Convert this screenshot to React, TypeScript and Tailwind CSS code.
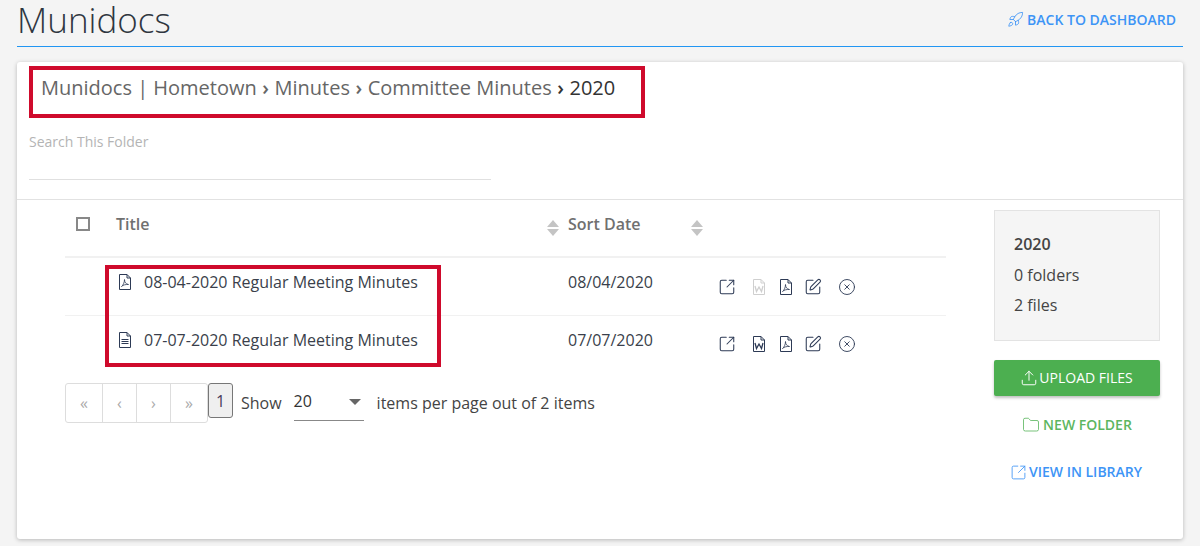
import { CircleX, Folder, Rocket, SquareArrowOutUpRight, SquarePen, Upload } from "lucide-react";

const ICON = "text-[#2d3a55]";

// page outline shared by the file type icons
function DocIcon({ kind, muted }: { kind: "pdf" | "word" | "text"; muted?: boolean }) {
  return (
    <svg
      width="14"
      height="16"
      viewBox="0 0 14 16"
      fill="none"
      stroke="currentColor"
      strokeWidth="1"
      className={muted ? "text-[#cfcfcf]" : ICON}
    >
      <path d="M1.5 .5h7.5l3.5 3.5v11.500h-11z" />
      <path d="M9 .5v3.500h3.500" />
      {kind === "pdf" && <path d="M3.500 12.500c1.500-1 3-4 3-7 0 3 1.500 4.500 4 5-2.500-.3-5.500.5-7 2z" strokeWidth=".8" />}
      {kind === "word" && <path d="M3 7l1.500 5.500 2.500-4.500 2.500 4.500 1.500-5.500" strokeWidth="1.300" />}
      {kind === "text" && <path d="M3.500 7.500h7M3.500 9.500h7M3.500 11.500h7" />}
    </svg>
  );
}

function RowActions({ wordMuted }: { wordMuted?: boolean }) {
  return (
    <div className="flex items-center">
      <SquareArrowOutUpRight size={18} strokeWidth={1.4} className={ICON} />
      <div className="ml-[16px] w-[14px]">
        <DocIcon kind="word" muted={wordMuted} />
      </div>
      <div className="ml-[13px] w-[14px]">
        <DocIcon kind="pdf" />
      </div>
      <SquarePen size={18} strokeWidth={1.4} className={`ml-[11px] ${ICON}`} />
      <CircleX size={18} strokeWidth={1.2} className={`ml-[16px] ${ICON}`} />
    </div>
  );
}

function SortArrows() {
  return (
    <div className="flex flex-col gap-[2px]">
      <div className="h-0 w-0 border-x-[6px] border-b-[7px] border-x-transparent border-b-[#c4c4c4]" />
      <div className="h-0 w-0 border-x-[6px] border-t-[7px] border-x-transparent border-t-[#c4c4c4]" />
    </div>
  );
}

function FileRow({
  icon,
  title,
  date,
  wordMuted,
  actionsClass,
}: {
  icon: "pdf" | "text";
  title: string;
  date: string;
  wordMuted?: boolean;
  actionsClass: string;
}) {
  return (
    <div className="flex h-[57px] items-start">
      <div className="ml-[53px] flex w-[450px] items-center pt-[13px]">
        <DocIcon kind={icon} />
        <span className="ml-[12px] text-[16px] leading-[22px] text-[#3a3f4b]">{title}</span>
      </div>
      <div className="w-[150px] pt-[13px] text-[16px] leading-[22px] text-[#3a3f4b]">{date}</div>
      <div className={actionsClass}>
        <RowActions wordMuted={wordMuted} />
      </div>
    </div>
  );
}

function Crumb({ dark }: { dark?: boolean }) {
  return <span className={dark ? "mx-[5.5px] font-semibold text-[#333]" : "mx-[5.5px] font-semibold text-[#666]"}>›</span>;
}

export default function App() {
  return (
    <div className="h-[546px] overflow-hidden bg-[#f4f4f4] px-[17px] font-['Open_Sans',sans-serif]">
      {/* Header */}
      <header className="flex h-[47px] items-center justify-between border-b border-[#2196f3] pt-[1px] pb-[8px]">
        <h1 className="text-[35px] leading-[34px] font-light text-[#2f3640]">Munidocs</h1>
        <a className="mr-[7px] flex items-center gap-[3px] text-[14px] font-semibold text-[#3d94f6]">
          <Rocket size={17} strokeWidth={1.2} />
          BACK TO DASHBOARD
        </a>
      </header>

      {/* Main card */}
      <main className="mt-[15px] h-[477px] rounded-[3px] bg-white shadow-[0_1px_4px_rgba(0,0,0,0.25)]">
        <div className="h-[138px] border-b border-[#e2e2e2] px-[12px] pt-[4px]">
          <div className="flex h-[52px] w-[616px] items-start border-[4px] border-[#cf0a2c] pt-[4px] pl-[8px] text-[20px] leading-[27px] text-[#666]">
            Munidocs | Hometown
            <Crumb />
            Minutes
            <Crumb />
            Committee Minutes
            <Crumb dark />
            <span className="text-[#333]">2020</span>
          </div>
          <div className="mt-[14px] text-[14px] leading-[20px] text-[#b4b4b4]">Search This Folder</div>
          <div className="mt-[27px] w-[462px] border-b border-[#e0e0e0]" />
        </div>

        <div className="flex">
          {/* File table */}
          <div className="ml-[48px] w-[881px]">
            <div className="flex h-[58px] items-start border-b-2 border-[#f1f1f1]">
              <div className="mt-[17px] ml-[11px] h-[14px] w-[14px] border-2 border-[#888]" />
              <div className="ml-[26px] w-[431px] pt-[13px] text-[16px] leading-[22px] font-semibold text-[#707070]">Title</div>
              <div className="pt-[20px]">
                <SortArrows />
              </div>
              <div className="ml-[9px] w-[123px] pt-[13px] text-[16px] leading-[22px] font-semibold text-[#707070]">Sort Date</div>
              <div className="pt-[20px]">
                <SortArrows />
              </div>
            </div>

            <div className="relative">
              <div className="border-b border-[#f1f1f1]">
                <FileRow icon="pdf" title="08-04-2020 Regular Meeting Minutes" date="08/04/2020" wordMuted actionsClass="pt-[20px]" />
              </div>
              <FileRow icon="text" title="07-07-2020 Regular Meeting Minutes" date="07/07/2020" actionsClass="pt-[19px]" />
              {/* Red highlight drawn over the rows */}
              <div className="absolute top-[7px] left-[40px] h-[102px] w-[336px] border-[4px] border-[#cf0a2c]" />
            </div>

            <div className="mt-[10px] flex items-start">
              <div className="flex h-[40px] rounded-[3px] border border-[#ddd] text-[16px] text-[#aaa]">
                <span className="flex w-[37px] items-center justify-center border-r border-[#ddd]">«</span>
                <span className="flex w-[34px] items-center justify-center border-r border-[#ddd]">‹</span>
                <span className="flex w-[34px] items-center justify-center border-r border-[#ddd]">›</span>
                <span className="flex w-[36px] items-center justify-center">»</span>
              </div>
              <span className="flex h-[35px] w-[25px] items-center justify-center rounded-[3px] border border-[#777] bg-[#efefef] text-[16px] text-[#4a3a5c]">
                1
              </span>
              <span className="ml-[8px] pt-[9px] text-[16px] leading-[22px] text-[#444]">Show</span>
              <div className="ml-[12px] flex h-[38px] w-[70px] items-start justify-between border-b border-[#888] pt-[7px]">
                <span className="text-[16px] leading-[22px] text-[#333]">20</span>
                <div className="mt-[9px] mr-[3px] h-0 w-0 border-x-[6px] border-t-[6px] border-x-transparent border-t-[#666]" />
              </div>
              <span className="ml-[13px] pt-[9px] text-[16px] leading-[22px] text-[#444]">items per page out of 2 items</span>
            </div>
          </div>

          {/* Sidebar */}
          <aside className="ml-[48px] w-[166px] pt-[10px]">
            <div className="h-[131px] border border-[#e3e3e3] bg-[#f5f5f5] px-[19px] pt-[18px] text-[16px] leading-[30.500px] text-[#444]">
              <div className="font-semibold">2020</div>
              <div>0 folders</div>
              <div>2 files</div>
            </div>
            <button className="mt-[19px] flex h-[36px] w-full items-center justify-center gap-[1px] rounded-[2px] bg-[#4caf50] pr-[1px] pb-[1px] text-[14px] font-medium text-white shadow-[0_2px_3px_rgba(0,0,0,0.25)]">
              <Upload size={18} strokeWidth={1.3} />
              UPLOAD FILES
            </button>
            <div className="mt-[19px] flex items-center justify-center gap-[3px] text-[14px] leading-[20px] font-semibold text-[#5cb660]">
              <Folder size={18} strokeWidth={1.1} />
              NEW FOLDER
            </div>
            <div className="mt-[27px] flex items-center justify-center gap-[2px] pr-[2px] text-[14px] leading-[20px] font-semibold text-[#3d94f6]">
              <SquareArrowOutUpRight size={17} strokeWidth={1.2} />
              VIEW IN LIBRARY
            </div>
          </aside>
        </div>
      </main>
    </div>
  );
}
